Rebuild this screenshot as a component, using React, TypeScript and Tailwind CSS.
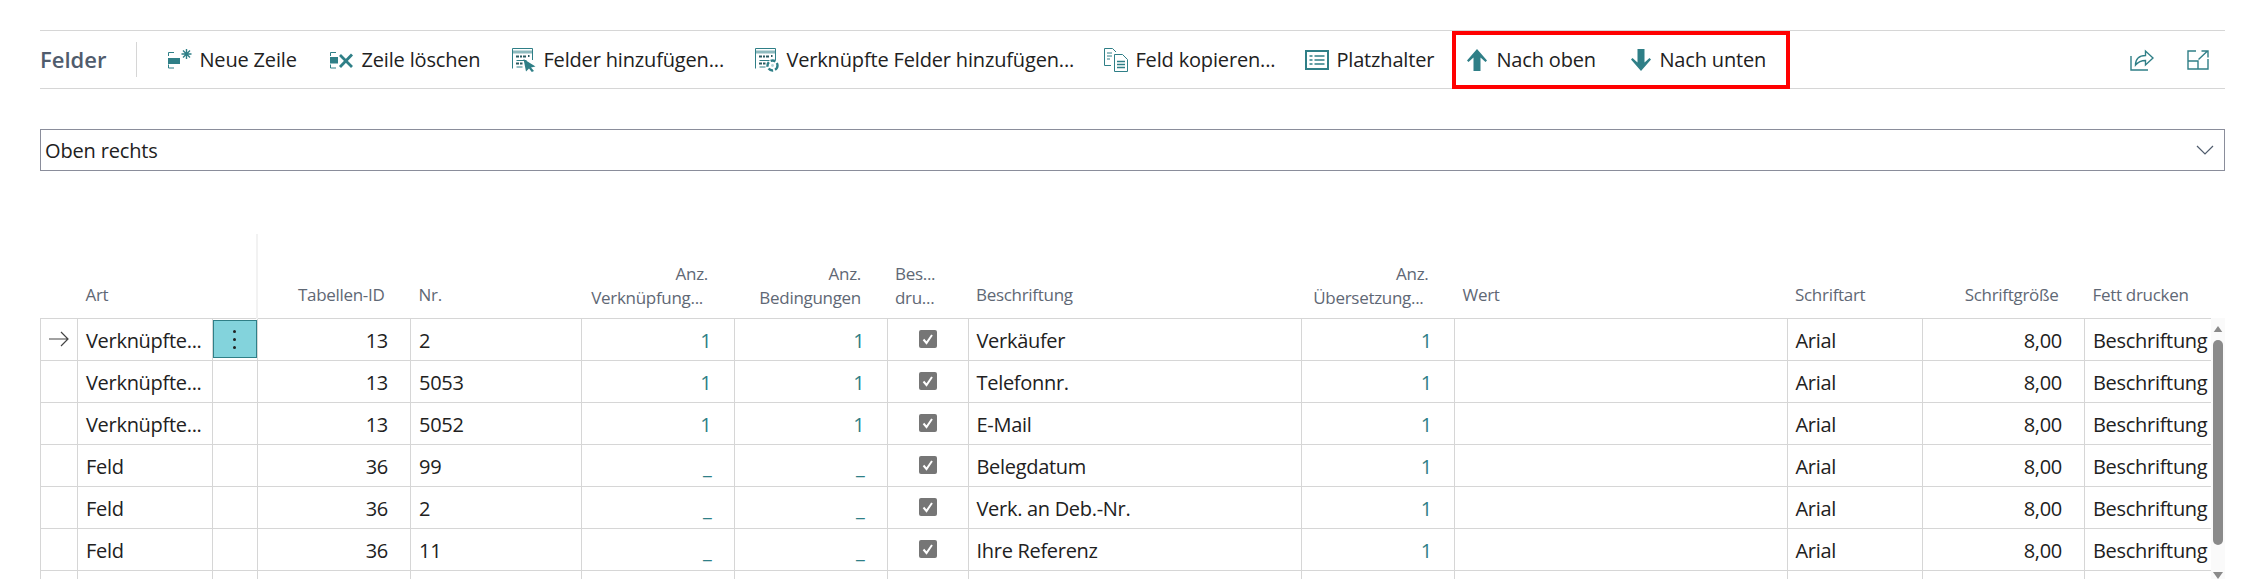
import React from 'react';

const TEAL = '#2f7f87';

const NewLineIcon = () => (
    <svg width="24" height="24" viewBox="0 0 24 24" fill="none" stroke={TEAL}>
        <path d="M0.5 8V4.5H6M0.5 16.5V20H6" strokeWidth="1" />
        <rect x="0" y="10" width="12" height="6" fill={TEAL} stroke="none" />
        <path d="M18.5 1v10M13.5 6h10M15 2.5l7 7M22 2.5l-7 7" strokeWidth="1.4" />
    </svg>
);

const DeleteLineIcon = () => (
    <svg width="24" height="24" viewBox="0 0 24 24" fill="none" stroke={TEAL}>
        <path d="M0.5 8V4.5H6M0.5 16.5V20H6" strokeWidth="1" />
        <rect x="0" y="9" width="8" height="6.5" fill={TEAL} stroke="none" />
        <path d="M10 7l12 12M22 6.5L10 19" strokeWidth="2.8" />
    </svg>
);

const FieldsBase = () => (
    <>
        <path d="M0.5 20.5V0.5H20.5V12" stroke={TEAL} strokeWidth="1" fill="none" />
        <rect x="0.5" y="2.5" width="20" height="3" fill={TEAL} opacity="0.55" />
        <path d="M4 8.5h3M8 8.5h2M11 8.5h3M16 8h1.5" stroke="#2a5a60" strokeWidth="2.2" />
        <path d="M4.5 12.5h10" stroke={TEAL} strokeWidth="1" />
        <path d="M4 15.5h3M8 15.5h2.5" stroke="#2a5a60" strokeWidth="2.2" />
        <path d="M4.5 19h6" stroke={TEAL} strokeWidth="1" />
    </>
);

const AddFieldsIcon = () => (
    <svg width="24" height="24" viewBox="0 0 24 24">
        <FieldsBase />
        <path d="M11.5 11l12 7.5-4.5 1 3 3.5-2.2 1-2.8-3.6-3 3z" fill={TEAL} />
    </svg>
);

const AddLinkedIcon = () => (
    <svg width="24" height="24" viewBox="0 0 24 24">
        <FieldsBase />
        <circle cx="17.5" cy="17.5" r="5" fill="#fff" stroke={TEAL} strokeWidth="2.4" strokeDasharray="5 2" />
        <circle cx="17.5" cy="17.5" r="1.4" fill="#b4d2d6" />
    </svg>
);

const CopyIcon = () => (
    <svg width="24" height="24" viewBox="0 0 24 24" fill="none" stroke={TEAL} strokeWidth="1">
        <path d="M7 17.5H0.5V0.5H8.5L12 4" />
        <path d="M3 5h5M3 8h5M3 11h3" />
        <path d="M10.5 6.5H18.5L23.5 11.5V23.5H10.5Z" fill="#fff" />
        <path d="M13 13.5h8M13 16.5h8M13 19.5h8" strokeWidth="1.4" />
    </svg>
);

const PlaceholderIcon = () => (
    <svg width="24" height="20" viewBox="0 0 24 20" fill="none" stroke={TEAL}>
        <rect x="1" y="1" width="22" height="18" strokeWidth="2" />
        <path d="M4.5 6h3M9.5 6h10M4.5 10h3M9.5 10h10M4.5 14h3M9.5 14h10" strokeWidth="1.5" />
    </svg>
);

const UpIcon = () => (
    <svg width="20" height="22" viewBox="0 0 20 22">
        <path d="M10 0L20 11.5l-1.5 1.5L13.5 8.5V22H6.5V8.5L1.5 13 0 11.5Z" fill={TEAL} />
    </svg>
);

const DownIcon = () => (
    <svg width="20" height="22" viewBox="0 0 20 22">
        <path d="M10 22L20 10.5 18.5 9 13.5 13.5V0H6.5V13.5L1.5 9 0 10.5Z" fill={TEAL} />
    </svg>
);

const ShareIcon = () => (
    <svg width="24" height="22" viewBox="0 0 24 22" fill="none" stroke={TEAL} strokeWidth="1.4">
        <path d="M1 7v14h17" />
        <path d="M5.5 16c0-6 3.5-9.5 10-9.5V2l7.5 7-7.5 7v-4.5c-4 0-7 1-10 4.5z" />
    </svg>
);

const ExpandIcon = () => (
    <svg width="22" height="20" viewBox="0 0 22 20" fill="none" stroke={TEAL} strokeWidth="1.4">
        <path d="M9 1H1V19H21V9" />
        <path d="M1 11H11V19" />
        <path d="M11.5 9.5L20.5 1M14.5 1H21V7.5" />
    </svg>
);

const actions = [
    { label: 'Neue Zeile', icon: <NewLineIcon />, width: 'w-[162px]' },
    { label: 'Zeile löschen', icon: <DeleteLineIcon />, width: 'w-[182px]' },
    { label: 'Felder hinzufügen...', icon: <AddFieldsIcon />, width: 'w-[243px]' },
    { label: 'Verknüpfte Felder hinzufügen...', icon: <AddLinkedIcon />, width: 'w-[349px]' },
    { label: 'Feld kopieren...', icon: <CopyIcon />, width: 'w-[201px]' },
    { label: 'Platzhalter', icon: <PlaceholderIcon />, width: 'w-[147px]' },
];

type Row = { art: string; table: string; nr: string; links: string; cond: string; label: string };

const rows: Row[] = [
    { art: 'Verknüpfte...', table: '13', nr: '2', links: '1', cond: '1', label: 'Verkäufer' },
    { art: 'Verknüpfte...', table: '13', nr: '5053', links: '1', cond: '1', label: 'Telefonnr.' },
    { art: 'Verknüpfte...', table: '13', nr: '5052', links: '1', cond: '1', label: 'E-Mail' },
    { art: 'Feld', table: '36', nr: '99', links: '_', cond: '_', label: 'Belegdatum' },
    { art: 'Feld', table: '36', nr: '2', links: '_', cond: '_', label: 'Verk. an Deb.-Nr.' },
    { art: 'Feld', table: '36', nr: '11', links: '_', cond: '_', label: 'Ihre Referenz' },
];

const colWidths = [37, 134.5, 45, 153.5, 171, 152.5, 153, 81, 333, 153.5, 332.5, 135.5, 162, 126.5];

const td = 'border-l border-b border-[#d6d6d6] pl-2 pt-[4px] whitespace-nowrap overflow-hidden';
const tdNum = 'border-l border-b border-[#d6d6d6] pr-[22px] pt-[4px] text-right whitespace-nowrap';
const th = 'font-normal align-bottom pb-[11px] leading-6 text-left pl-2 whitespace-nowrap';
const thNum = 'font-normal align-bottom pb-[11px] leading-6 text-right pr-[26px] whitespace-nowrap';
const thTwoLine = 'font-normal align-bottom pb-[8px] leading-6 text-right pr-[26px] whitespace-nowrap';

const Checkbox = () => (
    <svg width="18" height="18" viewBox="0 0 18 18" className="mx-auto block">
        <rect width="18" height="18" rx="2" fill="#767676" />
        <path d="M4.5 9.5l3 3.5 5.5-8" fill="none" stroke="#fff" strokeWidth="2" />
    </svg>
);

export default function App() {
    return (
        <div className="h-[579px] overflow-hidden bg-white pt-[30px] pl-[40px] pr-[18px] font-['Open_Sans',sans-serif] text-[#212121]">
            {/* toolbar */}
            <div className="flex h-[59px] items-center border-y border-[#d6d6d6] text-[20px] tracking-[-0.16px]">
                <span className="text-[22px] font-semibold text-[#505c6d] tracking-normal">Felder</span>
                <div className="ml-[30px] h-[35px] w-px bg-[#d6d6d6]" />
                <div className="ml-[31px] flex shrink-0 items-center">
                    {actions.map((a) => (
                        <button key={a.label} className={`flex shrink-0 items-center gap-[7px] ${a.width}`}>
                            {a.icon}
                            <span className="whitespace-nowrap pt-[1px]">{a.label}</span>
                        </button>
                    ))}
                </div>
                <div className="flex h-[58px] w-[338px] shrink-0 items-center border-4 border-[#ff0000] pl-[11px]">
                    <button className="flex w-[164px] items-center gap-[9px]">
                        <UpIcon />
                        <span className="whitespace-nowrap pt-[1px]">Nach oben</span>
                    </button>
                    <button className="flex items-center gap-[8px]">
                        <DownIcon />
                        <span className="whitespace-nowrap pt-[1px]">Nach unten</span>
                    </button>
                </div>
                <div className="ml-auto mr-[16px] flex items-center gap-[33px]">
                    <ShareIcon />
                    <ExpandIcon />
                </div>
            </div>

            {/* dropdown */}
            <div className="mt-[40px] flex h-[42px] items-center justify-between border border-[#8a8d9b] pl-1 pr-[10px] text-[20px] tracking-[-0.16px]">
                <span className="pt-[2px]">Oben rechts</span>
                <svg width="18" height="10" viewBox="0 0 18 10" fill="none" stroke="#505c6d" strokeWidth="1.2">
                    <path d="M1 1l8 8 8-8" />
                </svg>
            </div>

            {/* table + scrollbar */}
            <div className="mt-[63px] flex">
                <table className="w-[2171px] table-fixed border-collapse text-[20px] tracking-[-0.3px]">
                    <colgroup>
                        {colWidths.map((w, i) => (
                            <col key={i} style={{ width: w }} />
                        ))}
                    </colgroup>
                    <thead className="text-[17px] text-[#5f6875]">
                        <tr className="h-[84px] border-b border-[#d6d6d6]">
                            <th className={th}></th>
                            <th className={th}>Art</th>
                            <th className={`${th} border-r-2 border-[#f2f2f2]`}></th>
                            <th className={thNum}>Tabellen-ID</th>
                            <th className={th}>Nr.</th>
                            <th className={thTwoLine}>Anz.<br /><span className="pr-[5px]">Verknüpfung...</span></th>
                            <th className={thTwoLine}>Anz.<br />Bedingungen</th>
                            <th className="pl-2 pb-[8px] text-left align-bottom font-normal leading-6">Bes...<br />dru...</th>
                            <th className={th}>Beschriftung</th>
                            <th className={thTwoLine}>Anz.<br /><span className="pr-[5px]">Übersetzung...</span></th>
                            <th className={th}>Wert</th>
                            <th className={th}>Schriftart</th>
                            <th className={thNum}>Schriftgröße</th>
                            <th className={th}>Fett drucken</th>
                        </tr>
                    </thead>
                    <tbody>
                        {rows.map((r, i) => (
                            <tr key={i} className="h-[42px]">
                                <td className="border-l border-b border-[#d6d6d6] pl-[8px]">
                                    {i === 0 && (
                                        <svg width="20" height="16" viewBox="0 0 20 16" fill="none" stroke="#444" strokeWidth="1.2" className="block">
                                            <path d="M0 8h19M12 1l7 7-7 7" />
                                        </svg>
                                    )}
                                </td>
                                <td className={td}>{r.art}</td>
                                <td className="border-l border-b border-[#d6d6d6] p-0">
                                    {i === 0 && (
                                        <div className="flex h-[38px] w-[44px] flex-col items-center justify-center gap-[5px] border border-[#2f7f87] bg-[#83d3dc]">
                                            <span className="size-[3px] rounded-full bg-[#222]" />
                                            <span className="size-[3px] rounded-full bg-[#222]" />
                                            <span className="size-[3px] rounded-full bg-[#222]" />
                                        </div>
                                    )}
                                </td>
                                <td className={tdNum}>{r.table}</td>
                                <td className={td}>{r.nr}</td>
                                <td className={`${tdNum} text-[#2f7f87]`}>{r.links}</td>
                                <td className={`${tdNum} text-[#2f7f87]`}>{r.cond}</td>
                                <td className="border-l border-b border-[#d6d6d6]"><Checkbox /></td>
                                <td className={td}>{r.label}</td>
                                <td className={`${tdNum} text-[#2f7f87]`}>1</td>
                                <td className={td}></td>
                                <td className={td}>Arial</td>
                                <td className={tdNum}>8,00</td>
                                <td className={td}>Beschriftung</td>
                            </tr>
                        ))}
                        <tr className="h-[42px]">
                            {colWidths.map((_, i) => (
                                <td key={i} className="border-l border-[#d6d6d6]"></td>
                            ))}
                        </tr>
                    </tbody>
                </table>
                <div className="mt-[84px] flex h-[261px] w-[14px] flex-col items-center bg-[#fafafa]">
                    <svg width="10" height="7" viewBox="0 0 10 7" className="mt-[8px]"><path d="M5 0l5 7H0z" fill="#8a8a8a" /></svg>
                    <div className="mt-[8px] h-[205px] w-[10px] shrink-0 rounded-full bg-[#8a8a8a]" />
                    <svg width="10" height="7" viewBox="0 0 10 7" className="mt-[27px] shrink-0"><path d="M5 7l5-7H0z" fill="#8a8a8a" /></svg>
                </div>
            </div>
        </div>
    );
}
